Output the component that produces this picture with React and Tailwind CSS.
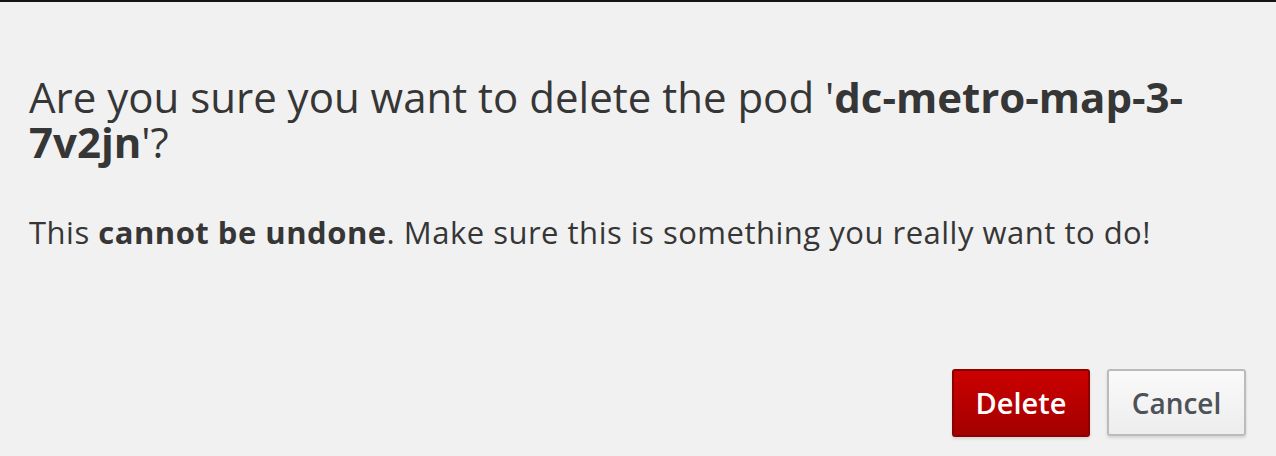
import React from 'react';

export default function App() {
    return (
        <div className="w-[1276px] h-[456px] bg-[#f1f1f1] overflow-hidden flex flex-col" style={{ fontFamily: '"Open Sans", sans-serif' }}>
            {/* Edge of the page header above the dialog */}
            <div className="h-[2px] bg-[#151515] shrink-0" />

            <div className="px-[29px] pt-[72px] text-[#363636]">
                <h1 className="text-[42px] leading-[45px] font-normal">
                    Are you sure you want to delete the pod '<span className="font-bold">dc-metro-map-3-7v2jn</span>'?
                </h1>
                <p className="mt-[48px] text-[31px] leading-[40px] tracking-[0.5px]">
                    This <span className="font-bold">cannot be undone</span>. Make sure this is something you really want to do!
                </p>
            </div>

            {/* Footer actions */}
            <div className="flex justify-end gap-[17px] pr-[30px] mt-[117px]">
                <button className="w-[138px] h-[68px] rounded-[3px] border-2 border-[#8b0000] bg-gradient-to-b from-[#cc0000] to-[#a30000] text-white text-[29px] font-semibold shadow-[0_2px_3px_rgba(0,0,0,0.12)]">
                    Delete
                </button>
                <button className="w-[139px] h-[67px] rounded-[3px] border-2 border-[#bbbbbb] bg-gradient-to-b from-[#fafafa] to-[#ededed] text-[#4d5258] text-[28px] font-semibold shadow-[0_2px_3px_rgba(0,0,0,0.12)]">
                    Cancel
                </button>
            </div>
        </div>
    );
}
